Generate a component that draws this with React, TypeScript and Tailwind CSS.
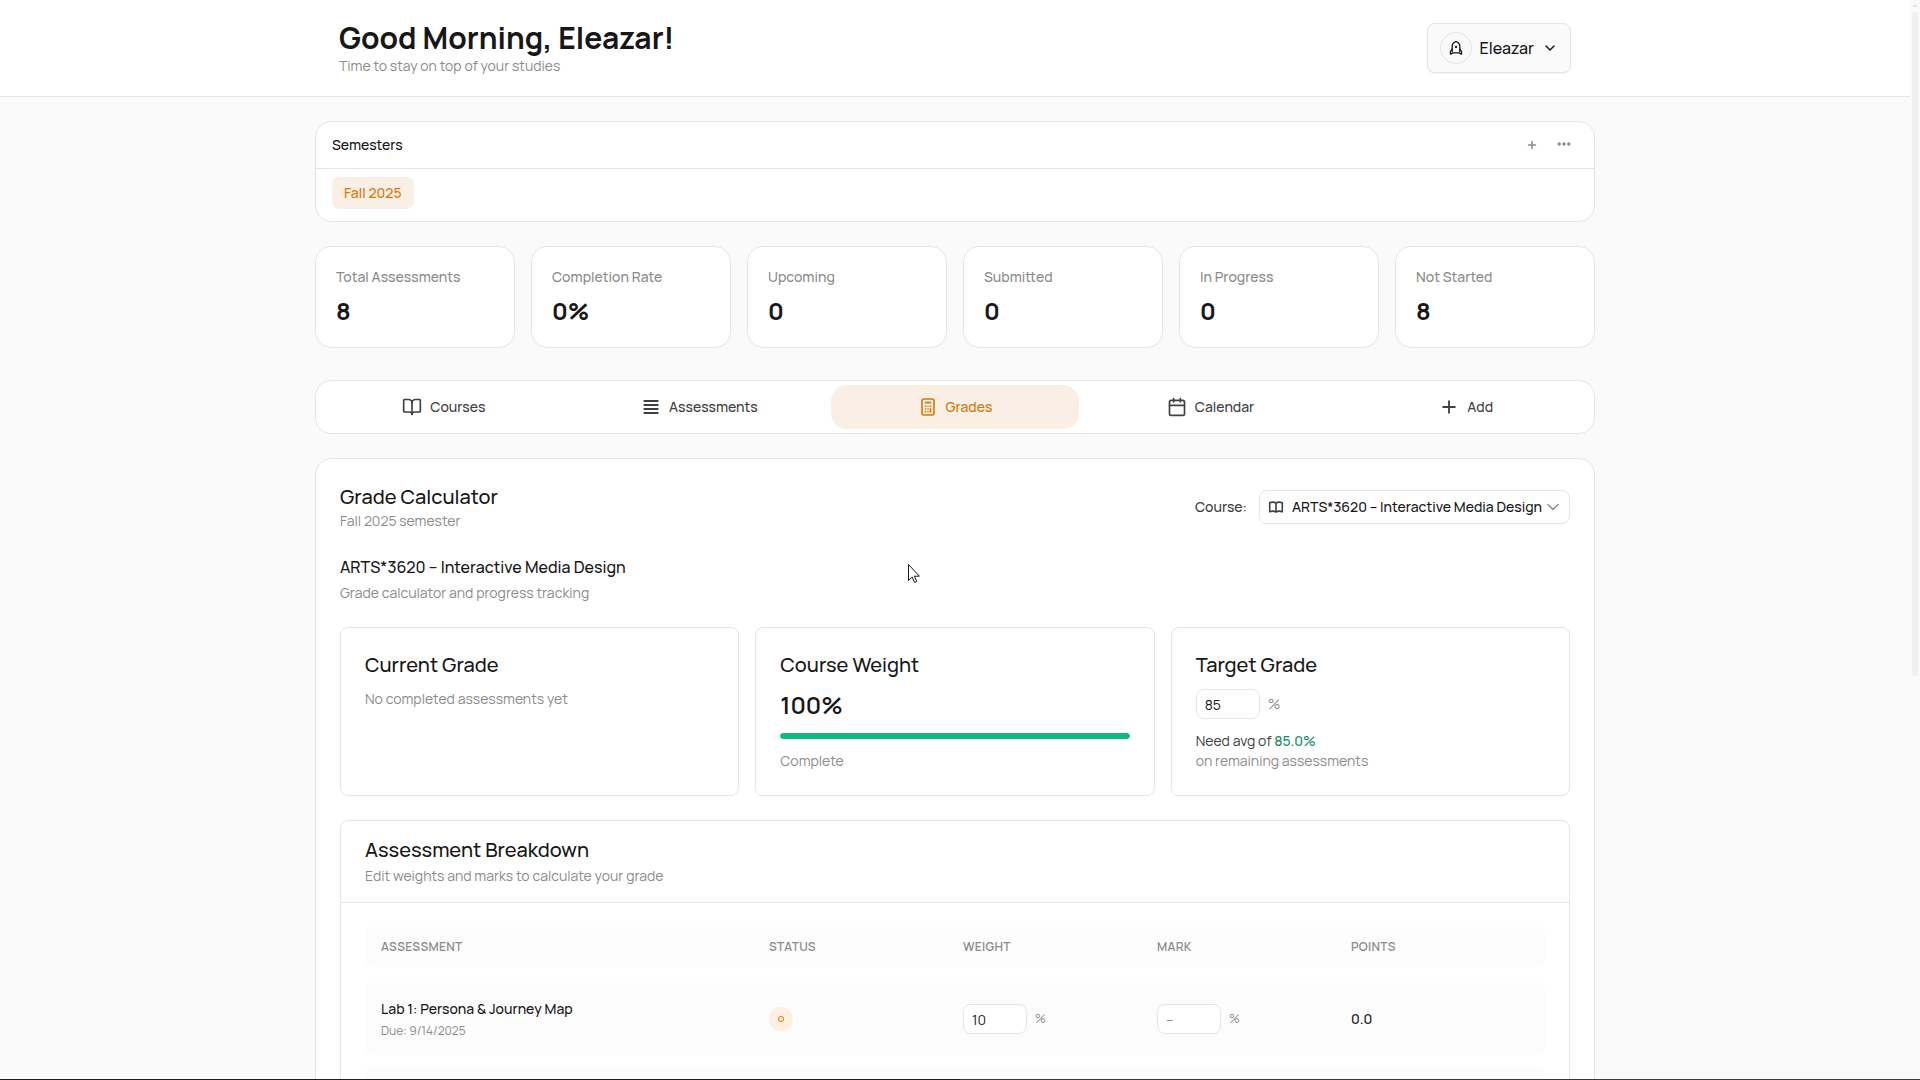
import { useState } from 'react'
import { BookOpen, Calendar, ChevronDown, Plus } from 'lucide-react'

const stats = [
  { label: 'Total Assessments', value: '8' },
  { label: 'Completion Rate', value: '0%' },
  { label: 'Upcoming', value: '0' },
  { label: 'Submitted', value: '0' },
  { label: 'In Progress', value: '0' },
  { label: 'Not Started', value: '8' }
]

const LinesIcon = () => (
  <svg className="h-5 w-5" viewBox="0 0 20 20" fill="none" stroke="currentColor" strokeWidth="2" aria-hidden="true">
    <path d="M2.6 4h14.8M2.6 8h14.8M2.6 12h14.8M2.6 16h14.8" />
  </svg>
)

const CalculatorIcon = () => (
  <svg className="h-5 w-5" viewBox="0 0 20 20" fill="none" stroke="currentColor" strokeWidth="1.6" aria-hidden="true">
    <rect x="4" y="2" width="12" height="16" rx="2" />
    <path d="M6.8 5.6h6.4" strokeWidth="1.8" />
    <path d="M6.8 9.3h1.4M9.3 9.3h1.4M11.8 9.3h1.4M6.8 12h1.4M9.3 12h1.4M6.8 14.7h1.4M9.3 14.7h1.4M12.5 11.3v4.1" />
  </svg>
)

const RocketIcon = () => (
  <svg className="h-4 w-4" viewBox="0 0 16 16" fill="none" stroke="currentColor" strokeWidth="1.3" strokeLinejoin="round" strokeLinecap="round" aria-hidden="true">
    <path d="M4.2 11.5V6.500C4.200 4 6 2.200 8 1.700C10 2.200 11.800 4 11.800 6.500v5" />
    <path d="M4.200 9.200L2.500 11.500v2.700L5 12.900h6l2.500 1.300v-2.700L11.800 9.200" />
    <circle cx="8" cy="7" r="0.500" fill="currentColor" />
  </svg>
)

const OpenBookIcon = () => (
  <svg className="mr-2 h-4 w-4 text-[#404040]" viewBox="0 0 16 16" fill="none" stroke="currentColor" strokeWidth="1.6" strokeLinejoin="round" aria-hidden="true">
    <path d="M8 4.200C6.500 3 3.800 2.900 1.700 3.700v9c2.100-.7 4.800-.6 6.300.3 1.500-.9 4.200-1 6.300-.3v-9C12.200 2.900 9.500 3 8 4.200zM8 4.200V13" />
  </svg>
)

const tabs = [
  { id: 'courses', label: 'Courses', icon: <BookOpen className="h-5 w-5" strokeWidth={2} /> },
  { id: 'assessments', label: 'Assessments', icon: <LinesIcon /> },
  { id: 'grades', label: 'Grades', icon: <CalculatorIcon /> },
  { id: 'calendar', label: 'Calendar', icon: <Calendar className="h-5 w-5" strokeWidth={2} /> },
  { id: 'add', label: 'Add', icon: <Plus className="h-5 w-5" strokeWidth={2.25} /> }
]

const assessments = [
  { name: 'Lab 1: Persona & Journey Map', due: '9/14/2025', weight: '10', points: '0.0' },
  { name: 'Lab 2: Wireframes', due: '9/28/2025', weight: '10', points: '0.0' }
]

type PercentInputProps = {
  label: string
  value?: string
  placeholder?: string
  small?: boolean
}

const PercentInput = ({ label, value, placeholder, small }: PercentInputProps) => (
  <div className="flex items-center gap-2">
    <input
      type="text"
      inputMode="decimal"
      aria-label={label}
      defaultValue={value}
      placeholder={placeholder}
      className="h-[30px] w-16 rounded-lg border border-[#e5e5e5] bg-white px-2 text-sm text-[#171717] placeholder:text-[#8c8c8c]"
    />
    <span className={small ? 'text-xs text-[#8c8c8c]' : 'text-sm text-[#8c8c8c]'}>%</span>
  </div>
)

const Header = () => (
  <header className="border-b border-[#e5e5e5] bg-white">
    <div className="mx-auto flex max-w-7xl items-center justify-between px-6 py-5">
      <div>
        <h1 className="text-3xl leading-9 font-bold text-[#171717]">Good Morning, Eleazar!</h1>
        <p className="text-sm text-[#8c8c8c]">Time to stay on top of your studies</p>
      </div>
      <button type="button" className="flex items-center gap-2 rounded-lg border border-[#e5e5e5] bg-[#fafafa] px-3 py-2 shadow-xs">
        <span className="flex h-8 w-8 items-center justify-center rounded-full border border-[#e5e5e5]">
          <RocketIcon />
        </span>
        <span className="text-base font-medium text-[#171717]">Eleazar</span>
        <ChevronDown className="h-4 w-4" strokeWidth={2.25} />
      </button>
    </div>
  </header>
)

const Semesters = () => (
  <section className="rounded-2xl border border-[#e5e5e5] bg-white">
    <div className="flex items-center justify-between border-b border-[#e5e5e5] px-4 py-3">
      <h2 className="text-sm leading-[22px] font-medium text-[#171717]">Semesters</h2>
      <div className="flex items-center gap-1 text-[#8c8c8c]">
        <button type="button" aria-label="Add semester" className="flex h-5 w-7 items-center justify-center">
          <Plus className="h-3 w-3" strokeWidth={3} />
        </button>
        <button type="button" aria-label="Semester options" className="flex h-5 w-7 items-center justify-center">
          <svg className="h-4 w-4" viewBox="0 0 16 16" fill="currentColor" aria-hidden="true">
            <circle cx="3.2" cy="7" r="1.700" />
            <circle cx="8" cy="7" r="1.700" />
            <circle cx="12.8" cy="7" r="1.700" />
          </svg>
        </button>
      </div>
    </div>
    <div className="px-4 pt-2 pb-3">
      <button type="button" className="h-8 rounded-lg bg-[#faefe5] px-3 text-sm font-medium text-[#d97706]">Fall 2025</button>
    </div>
  </section>
)

const CourseSelect = () => (
  <div className="flex items-center gap-3">
    <label htmlFor="course" className="text-sm font-medium text-[#404040]">Course:</label>
    <div className="flex h-[34px] items-center rounded-lg border border-[#e5e5e5] pr-1.5 pl-2">
      <OpenBookIcon />
      <select id="course" className="appearance-none bg-transparent text-sm font-medium text-[#171717]">
        <option>ARTS*3620 – Interactive Media Design</option>
      </select>
      <ChevronDown className="h-5 w-5 text-[#8c8c8c]" strokeWidth={1.75} />
    </div>
  </div>
)

const Summary = () => (
  <div className="mt-6 grid grid-cols-3 gap-4">
    <section className="rounded-lg border border-[#e5e5e5] p-6">
      <h4 className="mb-3 text-xl leading-tight font-medium">Current Grade</h4>
      <p className="text-sm text-[#8c8c8c]">No completed assessments yet</p>
    </section>

    <section className="rounded-lg border border-[#e5e5e5] p-6">
      <h4 className="mb-3 text-xl leading-tight font-medium">Course Weight</h4>
      <div className="text-2xl font-semibold">100%</div>
      <div className="my-3 h-[6px] overflow-hidden rounded-full bg-[#f0f0f0]">
        <div className="h-full rounded-full bg-[#10b981]" style={{ width: '100%' }} />
      </div>
      <p className="text-sm text-[#8c8c8c]">Complete</p>
    </section>

    <section className="rounded-lg border border-[#e5e5e5] p-6">
      <h4 className="mb-3 text-xl leading-tight font-medium">Target Grade</h4>
      <PercentInput label="Target grade" value="85" />
      <p className="mt-3 text-sm text-[#404040]">
        Need avg of <span className="font-medium text-[#15905f]">85.0%</span>
      </p>
      <p className="text-sm text-[#8c8c8c]">on remaining assessments</p>
    </section>
  </div>
)

const Breakdown = () => (
  <section className="mt-6 rounded-lg border border-[#e5e5e5]">
    <div className="border-b border-[#e5e5e5] px-6 py-4">
      <h4 className="text-xl leading-tight font-medium">Assessment Breakdown</h4>
      <p className="mt-1 text-sm text-[#8c8c8c]">Edit weights and marks to calculate your grade</p>
    </div>
    <div className="p-6">
      <table className="block text-left">
        <thead className="block">
          <tr className="grid grid-cols-6 gap-4 rounded-lg bg-[#fcfcfc] px-4 py-3 text-xs tracking-wide uppercase text-[#8c8c8c]">
            <th className="col-span-2 font-semibold">Assessment</th>
            <th className="font-semibold">Status</th>
            <th className="font-semibold">Weight</th>
            <th className="font-semibold">Mark</th>
            <th className="font-semibold">Points</th>
          </tr>
        </thead>
        <tbody className="mt-4 block space-y-3">
          {assessments.map((item) => (
            <tr key={item.name} className="grid grid-cols-6 items-center gap-4 rounded-lg bg-[#fcfcfc] p-4">
              <td className="col-span-2">
                <div className="text-sm font-medium text-[#171717]">{item.name}</div>
                <div className="mt-1 text-xs text-[#8c8c8c]">Due: {item.due}</div>
              </td>
              <td>
                <span className="flex h-6 w-6 items-center justify-center rounded-full bg-[#fdf0e0]" title="Not started">
                  <span className="h-[6px] w-[6px] rounded-full border border-[#d97706]" />
                </span>
              </td>
              <td><PercentInput small label={`Weight of ${item.name}`} value={item.weight} /></td>
              <td><PercentInput small label={`Mark for ${item.name}`} placeholder="–" /></td>
              <td className="text-sm font-medium text-[#171717]">{item.points}</td>
            </tr>
          ))}
        </tbody>
      </table>
    </div>
  </section>
)

const App = () => {
  const [active, setActive] = useState('grades')

  return (
    <div className="relative flex h-screen flex-col overflow-hidden bg-[#fafafa] font-['Manrope',Inter,sans-serif] text-[#171717]">
      <div className="flex min-h-0 flex-1">
        <div className="flex-1 overflow-y-auto [scrollbar-width:none]">
          <Header />
          <main className="mx-auto max-w-7xl py-6">
            <Semesters />

            {/* Stats */}
            <div className="mt-6 grid grid-cols-6 gap-4">
              {stats.map((stat) => (
                <div key={stat.label} className="rounded-2xl border border-[#e5e5e5] bg-white p-5">
                  <div className="text-sm font-medium text-[#8c8c8c]">{stat.label}</div>
                  <div className="mt-2 text-2xl font-bold">{stat.value}</div>
                </div>
              ))}
            </div>

            {/* Tabs */}
            <nav className="mt-8 grid grid-cols-5 gap-2 rounded-2xl border border-[#e5e5e5] bg-white p-1">
              {tabs.map((tab) => (
                <button
                  key={tab.id}
                  type="button"
                  onClick={() => setActive(tab.id)}
                  className={`flex h-11 items-center justify-center gap-2 rounded-2xl text-sm font-medium ${
                    active === tab.id ? 'bg-[#faefe5] text-[#d97706]' : 'text-[#404040]'
                  }`}
                >
                  {tab.icon}
                  {tab.label}
                </button>
              ))}
            </nav>

            {/* Grade calculator */}
            <section className="mt-6 rounded-2xl border border-[#e5e5e5] bg-white p-6">
              <div className="flex items-center justify-between">
                <div>
                  <h2 className="text-xl leading-7 font-medium">Grade Calculator</h2>
                  <p className="text-sm text-[#8c8c8c]">Fall 2025 semester</p>
                </div>
                <CourseSelect />
              </div>
              <h3 className="mt-6 text-base font-medium">ARTS*3620 – Interactive Media Design</h3>
              <p className="mt-1 text-sm text-[#8c8c8c]">Grade calculator and progress tracking</p>
              <Summary />
              <Breakdown />
            </section>
          </main>
        </div>

        {/* Scrollbar */}
        <div className="flex w-[10px] flex-col items-center bg-[#fafafa]" aria-hidden="true">
          <svg className="h-3 w-[10px]" viewBox="0 0 10 12" fill="#e5e5e5">
            <path d="M5 4l3 3H2z" />
          </svg>
          <div className="h-[61.5%] w-[6px] rounded-full bg-[#f0f0f0]" />
        </div>
      </div>
      <div className="flex h-px">
        <div className="flex-1 bg-[#1f2023]" />
        <div className="flex-1 bg-[#3b3b3b]" />
      </div>

      {/* Mouse pointer */}
      <svg className="pointer-events-none absolute top-[563px] left-[907px] h-[21px] w-[14px]" viewBox="0 0 14 21" fill="#fff" stroke="#171722" strokeWidth="1" aria-hidden="true">
        <path d="M1.500 1.500v16l3.700-3.500 2.400 5.500 2.200-1-2.400-5.300h5z" />
      </svg>
    </div>
  )
}

export default App
